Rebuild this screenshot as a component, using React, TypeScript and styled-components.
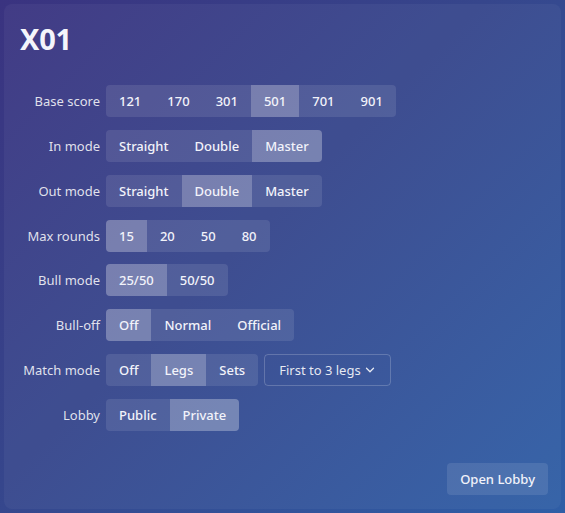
import styled, { createGlobalStyle } from 'styled-components';
import { ChevronDown } from 'lucide-react';

const GlobalStyle = createGlobalStyle`
	html, body {
		margin: 0;
		height: 100%;
	}
	body {
		background: linear-gradient(135deg, #3a3380 0%, #36468c 45%, #2f5ea6 100%);
		font-family: 'Noto Sans', 'Open Sans', sans-serif;
		color: #fff;
	}
	#root {
		height: 100%;
	}
`;

type Option = { label: string; selected?: boolean };

const ROWS: { label: string; options: Option[] }[] = [
	{
		label: 'Base score',
		options: [{ label: '121' }, { label: '170' }, { label: '301' }, { label: '501', selected: true }, { label: '701' }, { label: '901' }],
	},
	{ label: 'In mode', options: [{ label: 'Straight' }, { label: 'Double' }, { label: 'Master', selected: true }] },
	{ label: 'Out mode', options: [{ label: 'Straight' }, { label: 'Double', selected: true }, { label: 'Master' }] },
	{ label: 'Max rounds', options: [{ label: '15', selected: true }, { label: '20' }, { label: '50' }, { label: '80' }] },
	{ label: 'Bull mode', options: [{ label: '25/50', selected: true }, { label: '50/50' }] },
	{ label: 'Bull-off', options: [{ label: 'Off', selected: true }, { label: 'Normal' }, { label: 'Official' }] },
	{ label: 'Match mode', options: [{ label: 'Off' }, { label: 'Legs', selected: true }, { label: 'Sets' }] },
	{ label: 'Lobby', options: [{ label: 'Public' }, { label: 'Private', selected: true }] },
];

const App = () => {
	return (
		<>
			<GlobalStyle />
			<Page>
				<Card>
					<Title>X01</Title>
					<Form>
						{ROWS.map((row) => (
							<Row key={row.label}>
								<Label>{row.label}</Label>
								<Controls>
									<Segmented>
										{row.options.map((opt) => (
											<Segment key={opt.label} $selected={!!opt.selected}>
												{opt.label}
											</Segment>
										))}
									</Segmented>
									{row.label === 'Match mode' && (
										<Select>
											<span>First to 3 legs</span>
											<ChevronDown size={14} strokeWidth={2.2} />
										</Select>
									)}
								</Controls>
							</Row>
						))}
					</Form>
					<Footer>
						<ActionButton>Open Lobby</ActionButton>
					</Footer>
				</Card>
			</Page>
		</>
	);
};

const Page = styled.div`
	box-sizing: border-box;
	height: 100%;
	padding: 4px;
`;

const Card = styled.div`
	box-sizing: border-box;
	height: 100%;
	padding: 16px 13px 14px 16px;
	border-radius: 8px;
	background: rgba(255, 255, 255, 0.045);
	display: flex;
	flex-direction: column;
`;

const Title = styled.h1`
	margin: 0;
	padding-top: 1px;
	font-size: 29px;
	line-height: 36px;
	font-weight: 700;
	letter-spacing: -0.3px;
	color: #f4f5fb;
`;

const Form = styled.div`
	margin-top: 28px;
	display: flex;
	flex-direction: column;
	gap: 12.85px;
`;

const Row = styled.div`
	display: grid;
	grid-template-columns: 80px auto;
	column-gap: 6px;
	align-items: center;
`;

const Label = styled.div`
	text-align: right;
	font-size: 13px;
	color: rgba(255, 255, 255, 0.85);
	white-space: nowrap;
`;

const Controls = styled.div`
	display: flex;
	gap: 6px;
`;

const Segmented = styled.div`
	display: flex;
	height: 32px;
	border-radius: 4px;
	overflow: hidden;
	background: rgba(255, 255, 255, 0.1);
`;

const Segment = styled.button<{ $selected: boolean }>`
	border: 0;
	margin: 0;
	padding: 0 13px;
	font-family: inherit;
	font-size: 13px;
	font-weight: 500;
	color: #f2f3fa;
	background: ${({ $selected }) => ($selected ? 'rgba(255, 255, 255, 0.22)' : 'transparent')};
	cursor: pointer;
`;

const Select = styled.div`
	box-sizing: border-box;
	height: 32px;
	width: 127px;
	padding: 0 13px 0 14px;
	display: flex;
	align-items: center;
	justify-content: space-between;
	border: 1px solid rgba(255, 255, 255, 0.2);
	border-radius: 4px;
	font-size: 13px;
	color: rgba(255, 255, 255, 0.88);
`;

const Footer = styled.div`
	margin-top: auto;
	display: flex;
	justify-content: flex-end;
`;

const ActionButton = styled.button`
	height: 32px;
	padding: 0 13px;
	border: 0;
	border-radius: 4px;
	background: rgba(255, 255, 255, 0.1);
	font-family: inherit;
	font-size: 13px;
	font-weight: 500;
	color: #f2f3fa;
	cursor: pointer;
`;

export default App;
